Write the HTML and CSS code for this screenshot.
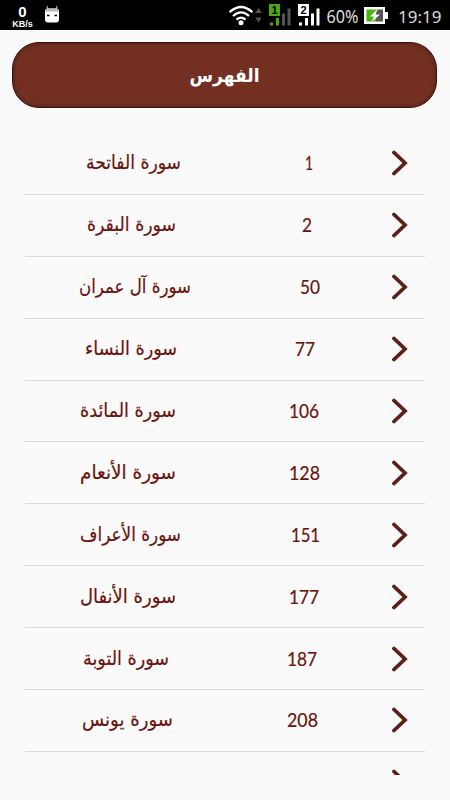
FILE: index.html
```html
<!DOCTYPE html>
<html lang="ar">

<head>
  <meta charset="UTF-8">
  <meta name="viewport" content="width=device-width, initial-scale=1.0">
  <title>الفهرس</title>
  <link rel="stylesheet" href="styles.css">
</head>

<body>

  <div class="statusbar">
    <div class="speed"><b>0</b><span>KB/s</span></div>
    <svg class="robot" width="16" height="20" viewBox="0 0 16 20">
      <path d="M4 5L3 0.800M12 5L13 0.800" stroke="#aaa" stroke-width="1.200"/>
      <path d="M1 6Q1 3.500 4 3.500H12Q15 3.500 15 6V14.500Q15 17.500 12 17.500H4Q1 17.500 1 14.500Z" fill="#fff"/>
      <path d="M1 6.500Q1 3.500 4 3.500H12Q15 3.500 15 6.500Z" fill="#bbb"/>
      <path d="M3 10.500H5.500M10.500 10.500H13" stroke="#000" stroke-width="1.500"/>
    </svg>
    <svg class="signals" width="168" height="30" viewBox="225 0 168 30">
      <!-- wifi -->
      <g fill="none" stroke="#fff" stroke-width="2.300">
        <path d="M229.600 12.200Q241 1.800 252.400 12.200"/>
        <path d="M233 16Q241 8.700 249 16"/>
        <path d="M236.500 19.700Q241 15.600 245.500 19.700"/>
      </g>
      <circle cx="241" cy="22.800" r="2.500" fill="#fff"/>
      <path d="M255.300 13L258.500 8L261.700 13ZM255.300 17.500L258.500 22.500L261.700 17.500Z" fill="#555"/>
      <!-- sim 1 -->
      <rect x="269" y="4" width="11" height="12" fill="#4ca60d"/>
      <text class="sim" x="274.500" y="13.800">1</text>
      <path d="M270 22.500H273V25.500H270ZM276 18H279V25.500H276Z" fill="#4ca60d"/>
      <path d="M282 13.500H285V25.500H282ZM287.500 8.500H290.500V25.500H287.500Z" fill="#555"/>
      <!-- sim 2 -->
      <rect x="298" y="4" width="11" height="12" fill="#fff"/>
      <text class="sim" x="303.500" y="13.800">2</text>
      <path d="M299 22.500H302V25.500H299ZM305 18H308V25.500H305ZM311 13.500H314V25.500H311ZM316.500 8.500H319.500V25.500H316.500Z" fill="#fff"/>
      <text class="percent" x="326.500" y="22.800" textLength="32" lengthAdjust="spacingAndGlyphs">60%</text>
      <!-- battery -->
      <path d="M364 7H385V12H388V19H385V24H364Z" fill="#fff"/>
      <rect x="366.500" y="9.500" width="9" height="12" fill="#4cb00d"/>
      <rect x="375.500" y="9.500" width="7.500" height="12" fill="#555"/>
      <path d="M378 8.500L370 16.500H374L371.500 22L380 14.500H375.500Z" fill="#fff"/>
    </svg>
    <span class="clock">19:19</span>
  </div>

  <h1 class="header">الفهرس</h1>

  <ul class="list" id="list"></ul>

  <script>
    // width = name, gap = space before the page number, pageWidth = number
    const suras = [
      { name: 'سورة الفاتحة', page: 1, width: 95, gap: 124, pageWidth: 8 },
      { name: 'سورة البقرة', page: 2, width: 89, gap: 126, pageWidth: 10 },
      { name: 'سورة آل عمران', page: 50, width: 112, gap: 109, pageWidth: 20 },
      { name: 'سورة النساء', page: 77, width: 92, gap: 118, pageWidth: 20 },
      { name: 'سورة المائدة', page: 106, width: 96, gap: 113, pageWidth: 30 },
      { name: 'سورة الأنعام', page: 128, width: 96, gap: 113, pageWidth: 31 },
      { name: 'سورة الأعراف', page: 151, width: 101, gap: 110, pageWidth: 29 },
      { name: 'سورة الأنفال', page: 177, width: 96, gap: 113, pageWidth: 30 },
      { name: 'سورة التوبة', page: 187, width: 86, gap: 118, pageWidth: 30 },
      { name: 'سورة يونس', page: 208, width: 91, gap: 114, pageWidth: 31 },
      { name: '', page: '', width: 90, gap: 114, pageWidth: 30 }
    ];

    document.getElementById('list').innerHTML = suras.map(s => `
      <li class="item">
        <div class="label" style="gap: ${s.gap}px">
          <svg class="name" width="${s.width}" height="32">
            <text x="${s.width / 2}" y="22" textLength="${s.width}" lengthAdjust="spacingAndGlyphs">${s.name}</text>
          </svg>
          <svg class="page" width="${s.pageWidth}" height="32">
            <text x="${s.pageWidth / 2}" y="22.500" textLength="${s.pageWidth}" lengthAdjust="spacingAndGlyphs">${s.page}</text>
          </svg>
        </div>
        <svg class="arrow" width="18" height="26" viewBox="0 0 18 26">
          <path d="M3 2.500L14 13L3 23.500"/>
        </svg>
      </li>`).join('');
  </script>
</body>

</html>
```
FILE: styles.css
```css
body {
  margin: 0;
  height: 800px;
  overflow: hidden;
  background-color: #fafafa;
  font-family: "DejaVu Sans", sans-serif;
}

.statusbar {
  display: flex;
  height: 30px;
  background-color: #000;
  color: #fff;
}

.speed {
  display: flex;
  flex-direction: column;
  align-items: center;
  width: 21px;
  margin-left: 12px;
  padding-top: 4px;
  font-family: "Liberation Sans", sans-serif;
  font-size: 9px;
  line-height: 10px;
  font-weight: bold;
}

.speed b {
  font-size: 15px;
  line-height: 15px;
}

.robot {
  margin-left: 11px;
  margin-top: 5px;
}

.signals {
  margin-left: 165px;
}

.sim {
  font: bold 11px "Liberation Sans", sans-serif;
  text-anchor: middle;
}

.percent {
  font: 17.5px "Noto Sans", sans-serif;
  fill: #ddd;
}

.clock {
  margin-left: 5px;
  font: 17px/33px "Noto Sans", sans-serif;
  color: #ddd;
}

.header {
  box-sizing: border-box;
  width: 425px;
  height: 66px;
  margin: 12px 13px 0 12px;
  border: 1px solid #4a0a08;
  border-radius: 27px;
  background-color: #733022;
  box-shadow: inset 0 0 3px 2px #5b2a20;
  color: #fff;
  font-family: "DejaVu Sans Condensed", "DejaVu Sans", sans-serif;
  font-size: 19px;
  line-height: 64px;
  text-align: center;
}

.list {
  height: 642px;
  margin: 25px 25px 0;
  padding: 0;
  overflow: hidden;
  list-style: none;
}

.item {
  display: flex;
  align-items: center;
  box-sizing: border-box;
  height: 61.9px;
  border-bottom: 1px solid #d8d8d8;
}

.label {
  display: flex;
  justify-content: center;
  width: 349px;
}

.name,
.page {
  overflow: visible;
  fill: #6b120c;
  stroke: #6b120c;
  stroke-width: 0.2px;
  font-size: 19.5px;
  text-anchor: middle;
}

.page {
  font-family: Lato, sans-serif;
}

.arrow {
  margin-left: 17px;
  fill: none;
  stroke: #5c2016;
  stroke-width: 3.8px;
  stroke-linecap: round;
}
```
